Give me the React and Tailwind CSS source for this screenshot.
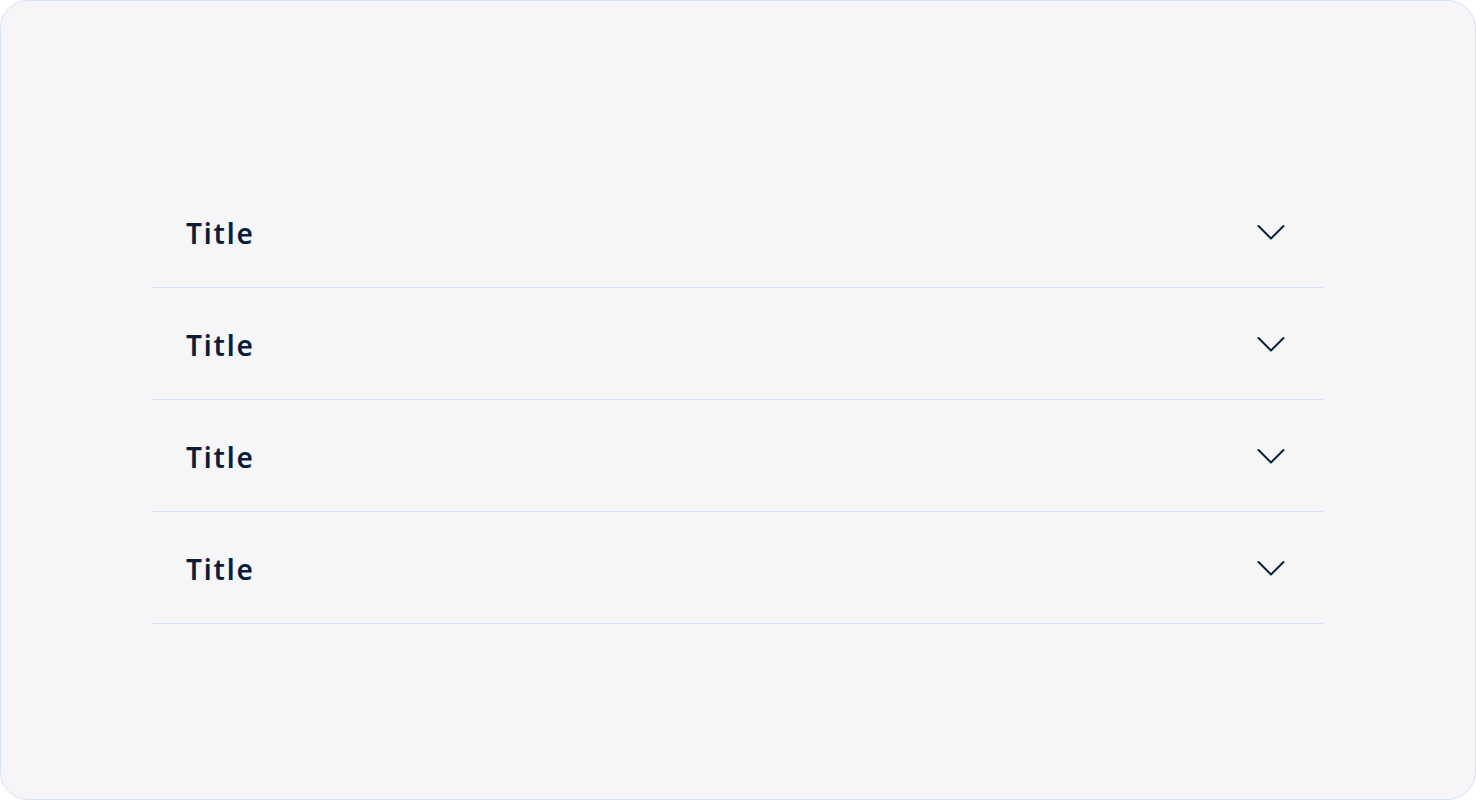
import React from "react";

const Chevron = () => (
  <svg width="30" height="18" viewBox="0 0 30 18" fill="none" className="shrink-0 mt-[2px]">
    <path d="M2.5 2 L15 14.5 L27.5 2" stroke="#0b1e38" strokeWidth="2" strokeLinecap="round" strokeLinejoin="round" />
  </svg>
);

export default function App() {
  const items = ["Title", "Title", "Title", "Title"];
  return (
    <div className="w-[1476px] h-[800px] bg-white">
      <div className="w-full h-full rounded-[28px] border border-[#d6e3f3] bg-[#f6f6f9] flex flex-col items-center pt-[175px]">
        <div className="w-[1170px] flex flex-col">
          {items.map((t, i) => (
            <div key={i} className="h-[112px] border-b border-[#d4e2f4] flex items-center justify-between pl-[33px] pr-[37px]">
              <span className="text-[28px] font-semibold text-[#0a1d3a] leading-none tracking-[0.065em] mt-[2px]" style={{ fontFamily: '"Noto Sans", sans-serif' }}>{t}</span>
              <Chevron />
            </div>
          ))}
        </div>
      </div>
    </div>
  );
}
